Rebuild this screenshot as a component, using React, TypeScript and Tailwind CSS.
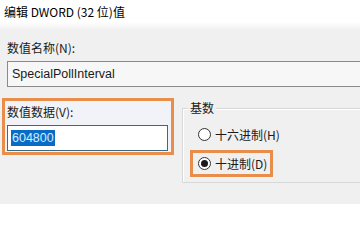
const ui = "font-['Microsoft_YaHei_UI','Noto_Sans_CJK_SC',sans-serif]";

function Radio({ checked }: { checked?: boolean }) {
  return (
    <span className="flex h-[13px] w-[13px] items-center justify-center rounded-full border border-[#333] bg-white">
      {checked && <span className="h-[7px] w-[7px] rounded-full bg-[#1a1a1a]" />}
    </span>
  );
}

export default function App() {
  return (
    <div
      className={`${ui} relative h-[204px] w-[360px] overflow-hidden bg-[#f0f0f0] text-[12px] leading-none text-[#1a1a1a]`}
    >
      {/* title bar */}
      <div className="flex h-[22px] items-center bg-white pl-[4px] pt-[1px] text-[12px] text-black">
        编辑 DWORD (32 位)值
      </div>
      <div className="h-[8px] bg-gradient-to-b from-white to-[#f0f0f0]" />

      {/* value name */}
      <div className="pl-[7px] pt-[12px]">数值名称(N):</div>
      <div className="ml-[7px] mt-[7px] flex h-[26px] w-[400px] items-center border border-[#8a8a8a] bg-[#f7f7f7] pl-[4px] font-['Liberation_Sans',sans-serif] text-[12.5px]">
        SpecialPollInterval
      </div>

      <div className="mt-[11px] flex items-start">
        {/* value data */}
        <div className="ml-[2px] flex h-[57px] w-[172px] shrink-0 flex-col border-[3px] border-[#e88d4a] bg-[#f1f3f8] pl-[2px]">
          <div className="pt-[5px]">数值数据(V):</div>
          <div className="mt-[7px] flex h-[26px] w-[161px] items-center border border-[#3b6b82] bg-white pl-[3px]">
            <span className="flex h-[16px] items-center bg-[#0a6bc7] px-[1px] font-['Liberation_Sans',sans-serif] text-[12.5px] text-[#cfefff]">
              604800
            </span>
          </div>
        </div>

        {/* radix group */}
        <div className="relative ml-[8px] mt-[10px] h-[75px] w-[240px] shrink-0 border border-[#d8d8d8] shadow-[inset_1px_1px_0_#fff]">
          <span className="absolute left-[5px] top-[-7px] bg-[#f0f0f0] px-[2px]">基数</span>
          <div className="flex flex-col pl-[7px] pt-[19px]">
            <div className="flex items-center gap-[4px] pl-[8px]">
              <Radio />
              <span>十六进制(H)</span>
            </div>
            <div className="mt-[9px] flex w-[83px] items-center gap-[4px] border-[3px] border-[#e88d4a] py-[4px] pl-[5px]">
              <Radio checked />
              <span>十进制(D)</span>
            </div>
          </div>
        </div>
      </div>
    </div>
  );
}
